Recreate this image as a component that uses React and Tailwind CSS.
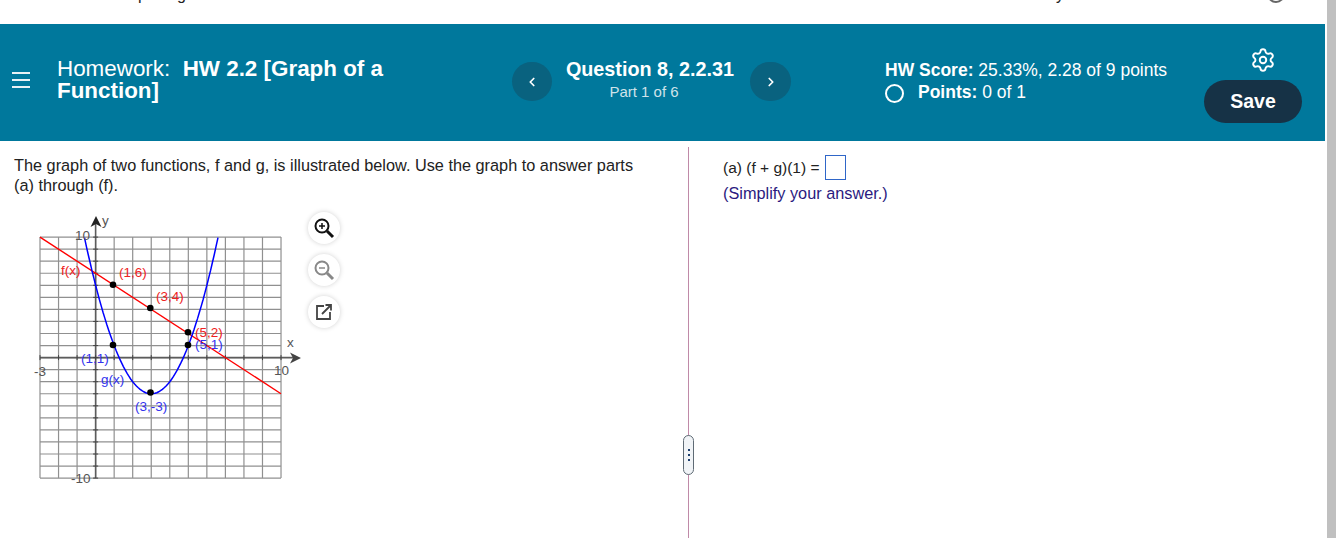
import React from "react";
import { ChevronLeft, ChevronRight, Settings } from "lucide-react";

const X = (v) => 40 + (v + 3) * 18.54;
const Y = (v) => 357.6 - v * 12.05;

function Graph() {
  const xs = Array.from({ length: 14 }, (_, i) => i - 3);
  const ys = Array.from({ length: 21 }, (_, i) => i - 10);
  const pts = [];
  for (let x = -0.6; x <= 6.605; x += 0.1) pts.push(`${X(x).toFixed(1)},${Y((x - 3) * (x - 3) - 3).toFixed(1)}`);
  const lab = "text-[13.5px]";
  return (
    <svg width="320" height="290" viewBox="0 210 320 290" className="block" style={{ fontFamily: '"Liberation Sans", Arial, sans-serif' }}>
      {xs.map((v) => <line key={v} x1={X(v)} x2={X(v)} y1={Y(10)} y2={Y(-10)} stroke="#909090" strokeWidth="1.2" />)}
      {ys.map((v) => <line key={v} x1={X(-3)} x2={X(10)} y1={Y(v)} y2={Y(v)} stroke="#909090" strokeWidth="1.2" />)}
      <line x1={X(0)} x2={X(0)} y1={Y(-10)} y2="222" stroke="#5c5c5c" strokeWidth="1.6" />
      <line x1={X(-3)} x2="296" y1={Y(0)} y2={Y(0)} stroke="#5c5c5c" strokeWidth="1.6" />
      {xs.map((v) => <line key={v} x1={X(v)} x2={X(v)} y1={Y(0) - 2.5} y2={Y(0) + 2.5} stroke="#444" />)}
      {ys.map((v) => <line key={v} x1={X(0) - 2.5} x2={X(0) + 2.5} y1={Y(v)} y2={Y(v)} stroke="#444" />)}
      <path d="M96 216 L90.5 227 L96 224 L101.500 227 Z" fill="#222" />
      <path d="M301 358 L290 352.500 L293 358 L290 363.500 Z" fill="#444" />
      <line x1={X(-3)} y1={Y(10)} x2={X(10)} y2={Y(-3)} stroke="#ff0000" strokeWidth="1.4" />
      <polyline points={pts.join(" ")} fill="none" stroke="#0000ff" strokeWidth="1.5" />
      {[[113, 284.700], [150.300, 308], [188, 332.300], [113, 345], [188, 345], [150.500, 392.500]].map(([x, y]) => <circle key={`${x}-${y}`} cx={x} cy={y} r="3.300" fill="#000" />)}
      <g fill="#555" className={lab}>
        <text x="102" y="225">y</text>
        <text x="287" y="347">x</text>
        <text x="75" y="240">10</text>
        <text x="274" y="375">10</text>
        <text x="34" y="376">-3</text>
        <text x="71" y="483">-10</text>
      </g>
      <g fill="#ee2222" className={lab}>
        <text x="61" y="275">f(x)</text>
        <text x="119" y="277">(1,6)</text>
        <text x="156" y="301">(3,4)</text>
        <text x="195" y="337">(5,2)</text>
      </g>
      <g fill="#3333ee" className={lab}>
        <text x="195" y="349">(5,1)</text>
        <text x="81" y="363">(1,1)</text>
        <text x="101" y="384">g(x)</text>
        <text x="135" y="411">(3,-3)</text>
      </g>
    </svg>
  );
}

function ToolButton({ children }) {
  return (
    <div className="w-[32px] h-[32px] rounded-full bg-white shadow-[0_0_5px_rgba(0,0,0,0.18)] flex items-center justify-center">
      {children}
    </div>
  );
}

function Mag({ plus, color }) {
  return (
    <svg width="22" height="22" viewBox="0 0 22 22" fill="none" stroke={color} strokeWidth="2">
      <circle cx="9" cy="9" r="6.500" />
      <line x1="14" y1="14" x2="20" y2="20" strokeWidth="3" />
      <line x1="6" y1="9" x2="12" y2="9" strokeWidth="1.500" />
      {plus && <line x1="9" y1="6" x2="9" y2="12" strokeWidth="1.500" />}
    </svg>
  );
}

export default function App() {
  return (
    <div className="w-[1336px] h-[538px] overflow-hidden bg-white flex font-['Liberation_Sans',Arial,sans-serif]">
      <div className="w-[1325px] shrink-0 flex flex-col">
        <div className="h-[24px] overflow-hidden relative">
          <span className="absolute left-[138px] top-[-14px] text-[16px] leading-[18px] text-[#222]">p</span>
          <span className="absolute left-[177px] top-[-14px] text-[16px] leading-[18px] text-[#222]">g</span>
          <span className="absolute left-[1056px] top-[-14px] text-[16px] leading-[18px] text-[#222]">y</span>
          <span className="absolute left-[1267px] top-[-15px] w-[18px] h-[18px] rounded-full border-2 border-[#666]"></span>
        </div>
        <header className="h-[117px] bg-[#00789c] text-white flex">
          <div className="w-[57px] shrink-0 pl-[12px] pt-[48px]">
            <div className="w-[18px] h-[16px] flex flex-col justify-between">
              <span className="h-[2px] bg-[#e8f2f6]"></span>
              <span className="h-[2px] bg-[#e8f2f6]"></span>
              <span className="h-[2px] bg-[#e8f2f6]"></span>
            </div>
          </div>
          <div className="w-[455px] shrink-0 pt-[34px] text-[22.4px] leading-[22px]">
            <div className="w-[340px]">
              <span>Homework:</span>
              <span className="font-bold">&nbsp; HW 2.2 [Graph of a Function]</span>
            </div>
          </div>
          <div className="shrink-0 w-[373px] flex items-start pt-[38px]">
            <button className="w-[40px] h-[39px] rounded-full bg-[#09627f] flex items-center justify-center">
              <ChevronLeft size={14} strokeWidth={3} />
            </button>
            <div className="w-[198px] text-center -mt-[5px]">
              <div className="text-[19.8px] leading-[24px] font-bold mr-[2px]">Question 8, 2.2.31</div>
              <div className="text-[15px] leading-[20px] mt-[1px] text-[#cfe3ea] mr-[14px]">Part 1 of 6</div>
            </div>
            <button className="w-[41px] h-[39px] rounded-full bg-[#09627f] flex items-center justify-center">
              <ChevronRight size={14} strokeWidth={3} />
            </button>
          </div>
          <div className="w-[319px] shrink-0 pt-[35px] text-[17.500px] leading-[22px]">
            <div><b>HW Score:</b> 25.33%, 2.28 of 9 points</div>
            <div className="flex items-center">
              <span className="w-[19px] h-[19px] rounded-full border-[2.500px] border-white mr-[14px] mt-[3px]"></span>
              <span><b>Points:</b> 0 of 1</span>
            </div>
          </div>
          <div className="flex flex-col items-center pt-[23px] w-[98px]">
            <Settings size={26} strokeWidth={1.8} className="ml-[20px]" />
            <button className="mt-[7px] w-[98px] h-[43px] rounded-full bg-[#163246] text-[19.500px] font-bold leading-[43px] text-center">Save</button>
          </div>
        </header>
        <main className="flex-1 flex min-h-0">
          <section className="w-[688px] shrink-0 flex flex-col">
            <p className="pl-[14px] pt-[14px] w-[640px] text-[16.3px] leading-[20px] text-[#222]">
              The graph of two functions, f and g, is illustrated below. Use the graph to answer parts (a) through (f).
            </p>
            <div className="flex">
              <div className="mt-[15px]"><Graph /></div>
              <div className="flex flex-col gap-[10px] mt-[17px] ml-[-13px] pl-[1px]">
                <ToolButton><Mag plus color="#111" /></ToolButton>
                <ToolButton><Mag color="#888" /></ToolButton>
                <ToolButton>
                  <svg width="20" height="20" viewBox="0 0 20 20" fill="none" stroke="#444" strokeWidth="1.800">
                    <path d="M10 4H3v13h13V10" />
                    <path d="M8 12 17 3M11.500 3H17V8.500" />
                  </svg>
                </ToolButton>
              </div>
            </div>
          </section>
          <section className="relative flex-1 border-l border-[#c08aa8] mt-[6px] pl-[34px] pt-[8px]">
            <div className="flex items-center text-[15.500px] leading-[22px] text-[#222]">
              (a) (f + g)(1) =
              <span className="ml-[6px] w-[21px] h-[25px] border border-[#2f66c8] bg-white"></span>
            </div>
            <p className="text-[16.3px] leading-[21px] mt-[3px] text-[#2b1a80]">(Simplify your answer.)</p>
            <div className="absolute left-[-6px] top-[288px] w-[11px] h-[40px] rounded-full border-[1.500px] border-[#5f6b75] bg-[#f1f4f7] flex flex-col items-center justify-center gap-[3px]">
              <span className="w-[2px] h-[2px] bg-[#1d3f6e]"></span>
              <span className="w-[2px] h-[2px] bg-[#1d3f6e]"></span>
              <span className="w-[2px] h-[2px] bg-[#1d3f6e]"></span>
            </div>
          </section>
        </main>
      </div>
      <div className="w-[2px] shrink-0 bg-white"></div>
      <div className="flex-1 bg-[#c0c0c0]"></div>
    </div>
  );
}
